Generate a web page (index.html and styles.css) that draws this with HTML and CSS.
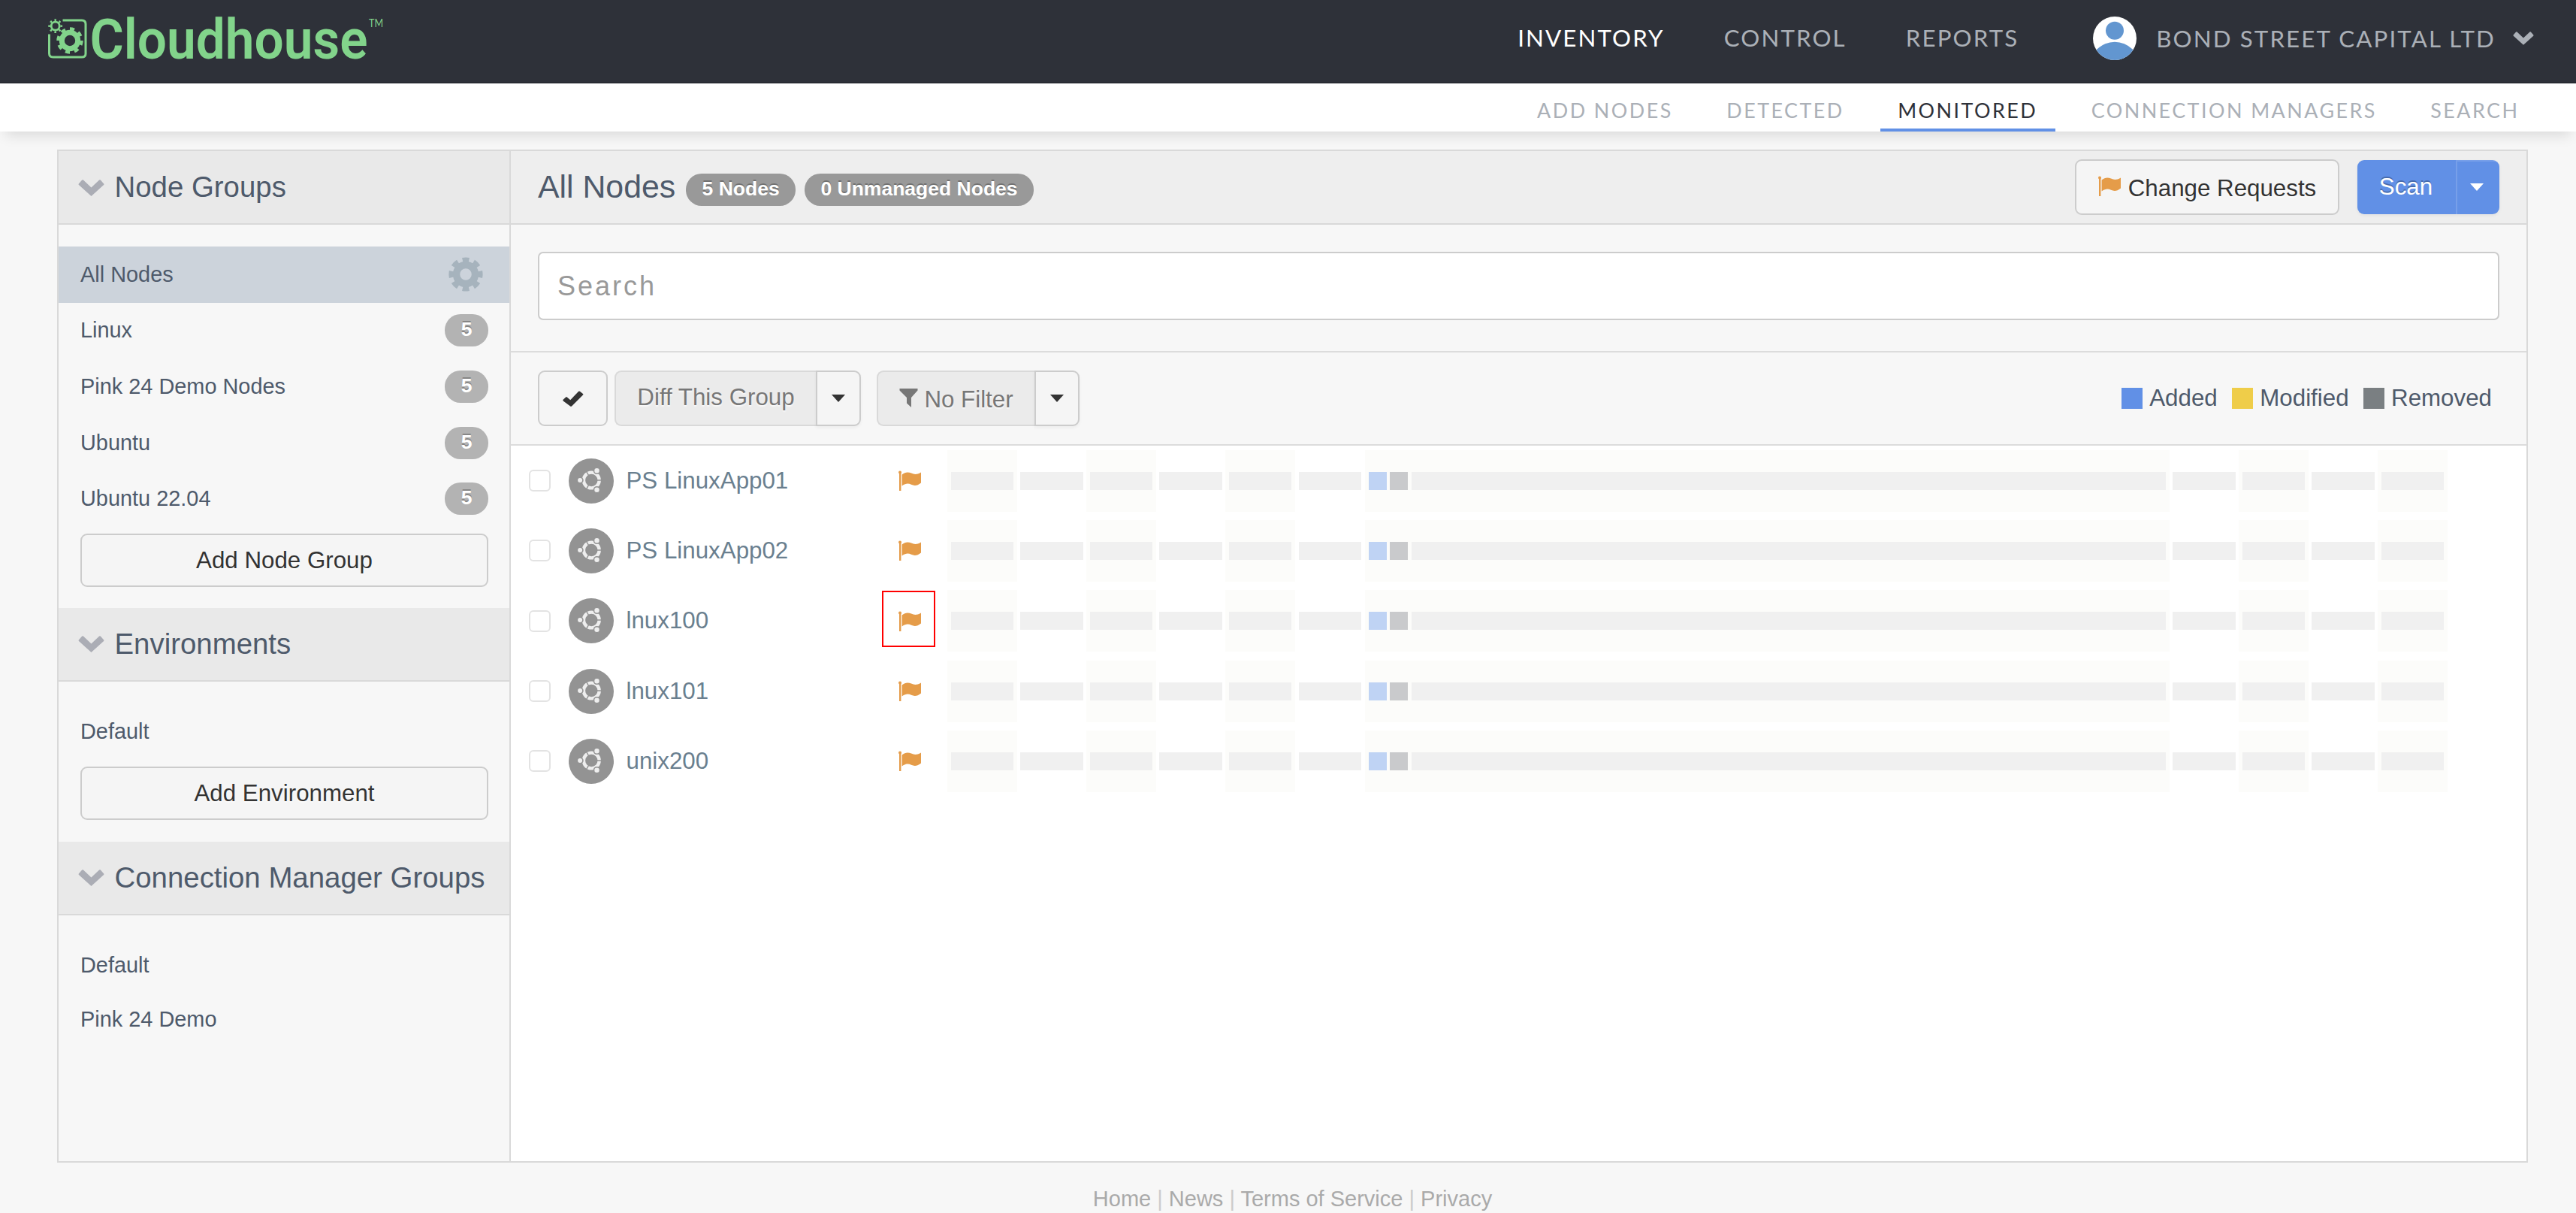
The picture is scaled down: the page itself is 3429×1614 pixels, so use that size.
FILE: index.html
```html
<!DOCTYPE html>
<html lang="en">
<head>
<meta charset="utf-8">
<title>Cloudhouse</title>
<link rel="stylesheet" href="styles.css">
</head>
<body>
<svg class="defs" aria-hidden="true">
  <symbol id="flag" viewBox="0 0 30 27"><circle cx="2" cy="2.4" r="2"/><rect x="1" y="2" width="2.4" height="25"/><path d="M4.6 5.5C9 1.8 13 1.8 17 3.6S24 6 30 2.6V16.5C25 20.6 21 20.6 17 18.8S10 17 4.6 20.4Z"/></symbol>
  <symbol id="chevron" viewBox="0 0 35 23"><path d="M.8 6.6 5.2 1.6Q6 .8 6.9 1.6L17.5 11.6 28.1 1.6Q29 .8 29.8 1.6L34.2 6.6Q34.7 7.3 34.1 8L17.5 23 .9 8Q.3 7.3 .8 6.6Z"/></symbol>
  <symbol id="ubuntu" viewBox="0 0 60 60">
    <circle cx="30" cy="30" r="30" fill="#939393"/>
    <g transform="translate(30.3 29)">
      <circle r="10.4" fill="none" stroke="#eee" stroke-width="4.4"/>
      <g stroke="#939393" stroke-width="1.4"><path d="M6 0H14M-3-5.2-7-12.1M-3 5.2-7 12.1"/></g>
      <g fill="#eee" stroke="#939393" stroke-width="1.6"><circle cx="-15.2" r="3.8"/><circle cx="7.2" cy="-12.7" r="4"/><circle cx="7.2" cy="12.7" r="4"/></g>
    </g>
  </symbol>
</svg>

<header class="topbar">
  <a class="logo">
    <svg width="450" height="60" viewBox="0 0 450 60">
      <g fill="none" stroke="#82d48b">
        <path d="M19.5 7H45Q50 7 50 12V51.500Q50 56 45 56H6.500Q1.500 56 1.500 51V25.500" stroke-width="3"/>
        <circle cx="29" cy="34" r="10.7" stroke-width="7"/>
        <circle cx="29" cy="34" r="15.5" stroke-width="4.4" pathLength="16" stroke-dasharray="1 1"/>
        <circle cx="9.7" cy="14.7" r="5.5" stroke-width="2.8"/>
        <circle cx="9.7" cy="14.7" r="8" stroke-width="2.8" pathLength="16" stroke-dasharray=".8 1.2" stroke-dashoffset=".4"/>
      </g>
      <text class="logo-name" x="55.5" y="57.5" textLength="370" lengthAdjust="spacingAndGlyphs">Cloudhouse</text>
      <text class="logo-tm" x="427" y="16" textLength="19" lengthAdjust="spacingAndGlyphs">TM</text>
    </svg>
  </a>
  <nav class="mainnav"><a class="on">INVENTORY</a><a>CONTROL</a><a>REPORTS</a></nav>
  <div class="account">
    <svg width="58" height="58" viewBox="0 0 58 58"><clipPath id="disc"><circle cx="29" cy="29" r="29"/></clipPath><g clip-path="url(#disc)"><rect width="58" height="58" fill="#fff"/><g fill="#6296d0"><circle cx="29" cy="18.7" r="12"/><circle cx="29" cy="66.7" r="33"/></g></g></svg>
    <span>BOND STREET CAPITAL LTD</span>
    <svg class="chev" width="28" height="19"><use href="#chevron"/></svg>
  </div>
</header>
<nav class="subnav"><a>ADD NODES</a><a>DETECTED</a><a class="on">MONITORED</a><a>CONNECTION MANAGERS</a><a>SEARCH</a></nav>

<main class="panel">
  <aside class="sidebar">
    <h2><svg width="35" height="23"><use href="#chevron"/></svg>Node Groups</h2>
    <ul>
      <li class="on">All Nodes
        <svg width="46" height="46" viewBox="-23 -23 46 46"><g fill="none" stroke="#a6b3bd"><circle r="12.5" stroke-width="9.4"/><circle r="19.4" stroke-width="6.4" pathLength="16" stroke-dasharray="1.15 .85" stroke-dashoffset=".575"/></g></svg></li>
      <li>Linux<b>5</b></li>
      <li>Pink 24 Demo Nodes<b>5</b></li>
      <li>Ubuntu<b>5</b></li>
      <li>Ubuntu 22.04<b>5</b></li>
    </ul>
    <button class="btn wide groups">Add Node Group</button>
    <h2><svg width="35" height="23"><use href="#chevron"/></svg>Environments</h2>
    <ul class="plain"><li>Default</li></ul>
    <button class="btn wide envs">Add Environment</button>
    <h2><svg width="35" height="23"><use href="#chevron"/></svg>Connection Manager Groups</h2>
    <ul class="plain"><li>Default</li><li>Pink 24 Demo</li></ul>
  </aside>

  <section class="content">
    <div class="titlebar">
      <h1>All Nodes</h1><span class="pill">5 Nodes</span><span class="pill">0 Unmanaged Nodes</span>
      <button class="btn requests"><svg class="flag" width="30" height="27"><use href="#flag"/></svg>Change Requests</button>
      <div class="scan"><button>Scan</button><button class="drop"><i class="caret"></i></button></div>
    </div>
    <div class="searchbar"><input type="text" placeholder="Search"></div>
    <div class="toolbar">
      <button class="btn check"><svg width="28" height="21" viewBox="0 0 28 21"><path d="M.6 11.8 4.2 8.4Q5 7.8 5.8 8.5L10.2 12.2 21.2.8Q22 .1 22.9.8L27 4Q27.7 4.7 27 5.5L12.3 20.2Q11 21.4 9.8 20.2L.7 13.4Q0 12.6.6 11.8Z" fill="#333"/></svg></button>
      <div class="split diff"><button class="btn off">Diff This Group</button><button class="btn drop"><i class="caret"></i></button></div>
      <div class="split filter"><button class="btn off"><svg width="25" height="25" viewBox="0 0 25 25"><path d="M.5 0H24.5V2.5L16 12V25L10 19.5V12L.5 2.5Z" fill="#777"/></svg>No Filter</button><button class="btn drop"><i class="caret"></i></button></div>
      <div class="legend"><span class="added">Added</span><span class="modified">Modified</span><span class="removed">Removed</span></div>
    </div>
    <div class="nodes">
      <div class="node"><i class="box"></i><svg class="os"><use href="#ubuntu"/></svg><a>PS LinuxApp01</a><span class="mark"><svg class="flag" width="30" height="27"><use href="#flag"/></svg></span><div class="timeline"><i></i><i></i><i></i><i></i><i></i><i></i><div class="now"><i class="a"></i><i class="r"></i><i></i></div><i></i><i></i><i></i><i></i></div></div>
      <div class="node"><i class="box"></i><svg class="os"><use href="#ubuntu"/></svg><a>PS LinuxApp02</a><span class="mark"><svg class="flag" width="30" height="27"><use href="#flag"/></svg></span><div class="timeline"><i></i><i></i><i></i><i></i><i></i><i></i><div class="now"><i class="a"></i><i class="r"></i><i></i></div><i></i><i></i><i></i><i></i></div></div>
      <div class="node"><i class="box"></i><svg class="os"><use href="#ubuntu"/></svg><a>lnux100</a><span class="mark picked"><svg class="flag" width="30" height="27"><use href="#flag"/></svg></span><div class="timeline"><i></i><i></i><i></i><i></i><i></i><i></i><div class="now"><i class="a"></i><i class="r"></i><i></i></div><i></i><i></i><i></i><i></i></div></div>
      <div class="node"><i class="box"></i><svg class="os"><use href="#ubuntu"/></svg><a>lnux101</a><span class="mark"><svg class="flag" width="30" height="27"><use href="#flag"/></svg></span><div class="timeline"><i></i><i></i><i></i><i></i><i></i><i></i><div class="now"><i class="a"></i><i class="r"></i><i></i></div><i></i><i></i><i></i><i></i></div></div>
      <div class="node"><i class="box"></i><svg class="os"><use href="#ubuntu"/></svg><a>unix200</a><span class="mark"><svg class="flag" width="30" height="27"><use href="#flag"/></svg></span><div class="timeline"><i></i><i></i><i></i><i></i><i></i><i></i><div class="now"><i class="a"></i><i class="r"></i><i></i></div><i></i><i></i><i></i><i></i></div></div>
    </div>
  </section>
</main>
<footer><a>Home</a> | <a>News</a> | <a>Terms of Service</a> | <a>Privacy</a></footer>
</body>
</html>
```
FILE: styles.css
```css
*, ::before, ::after { box-sizing: border-box; }
html, body { height: 100%; }
body {
  margin: 0;
  overflow: hidden;
  background: #f7f7f7;
  color: #4e5a6b;
  font: 31.3px/1.15 "Liberation Sans", Arial, sans-serif;
}
svg { display: block; flex: none; }
button, input { font: inherit; margin: 0; }
ul { list-style: none; margin: 0; padding: 0; }
.defs { width: 0; height: 0; position: absolute; }
.flag { fill: #e59c49; }

/* header */
.topbar {
  height: 111px;
  padding: 0 56px 10px 62px;
  display: flex;
  align-items: center;
  background: #2e3139;
  color: #abb0b7;
  font-family: Lato, sans-serif;
  letter-spacing: 2.1px;
  border-bottom: 2px solid #282b32;
}
.logo { margin-right: auto; padding: 1px 0 0 2px; }
.logo svg { overflow: visible; }
.logo-name { font: 600 75px Roboto, sans-serif; fill: #82d48b; letter-spacing: 0; }
.logo-tm { font: 400 15px Lato, sans-serif; fill: #82d48b; letter-spacing: 0; }
.mainnav { display: flex; gap: 79px; }
.mainnav .on { color: #fff; }
.account { display: flex; align-items: center; margin-left: 99px; padding-top: 2px; }
.account span { margin: 0 23px 0 26px; }
.chev { fill: #abb0b7; }

.subnav {
  height: 64px;
  padding-right: 52px;
  display: flex;
  justify-content: flex-end;
  gap: 24.5px;
  background: #fff;
  color: #abb0b7;
  font: 26.9px/1.2 Lato, sans-serif;
  letter-spacing: 2.45px;
  box-shadow: 0 12px 18px -7px rgba(0, 0, 0, .12);
}
.subnav a { padding: 20px 23.5px 0; border-bottom: 4px solid transparent; }
.subnav .on { color: #2e3139; border-color: #6190e6; }

/* main frame */
.panel {
  display: flex;
  width: 3289px;
  height: 1348px;
  margin: 24px 0 0 76px;
  border: 2px solid #d9d9d9;
}
.sidebar { width: 602px; border-right: 2px solid #d9d9d9; font-size: 28.9px; }
.sidebar h2 {
  height: 98px;
  margin: 0 0 29px;
  padding-left: 26px;
  display: flex;
  align-items: center;
  gap: 13.5px;
  background: #e9e9e9;
  border-bottom: 2px solid #d9d9d9;
  font-size: 38.4px;
  font-weight: 400;
  white-space: nowrap;
}
.sidebar h2 svg { fill: #abadb5; }
.sidebar li {
  height: 74.67px;
  padding: 0 28px 0 29px;
  display: flex;
  align-items: center;
  justify-content: space-between;
}
.sidebar li.on { background: #ccd3db; padding-right: 35px; }
.sidebar .plain li { height: 72px; padding-top: 3px; }
.sidebar b {
  width: 58px;
  height: 43px;
  border-radius: 21px;
  background: #b3b3b3;
  color: #fff;
  font-size: 26.5px;
  line-height: 40px;
  text-align: center;
  text-shadow: 0 -2px 0 rgba(0, 0, 0, .25);
}

.btn {
  display: flex;
  align-items: center;
  justify-content: center;
  padding: 0;
  border: 2px solid #ccc;
  border-radius: 9px;
  background: #f5f5f5;
  color: #333;
  text-shadow: 0 2px 2px rgba(255, 255, 255, .75);
  font-size: 31.3px;
}
.wide { width: 543px; height: 71px; margin: 0 0 28px 29px; padding-top: 2px; }
.groups { margin-top: 8.6px; }
.envs { margin-top: 12px; margin-bottom: 29px; }

/* content */
.content { flex: 1; display: flex; flex-direction: column; background: #fff; }
.titlebar {
  height: 98px;
  padding: 0 36px 0 36px;
  display: flex;
  align-items: center;
  background: #eee;
  border-bottom: 2px solid #d9d9d9;
}
h1 { margin: 0 14px 0 0; padding-bottom: 1px; font-size: 42.8px; font-weight: 400; }
.pill {
  height: 43px;
  margin: 7px 12px 0 0;
  padding: 0 21.4px;
  border-radius: 21px;
  background: #999;
  color: #fff;
  font-size: 26.5px;
  font-weight: 700;
  line-height: 40px;
  text-shadow: 0 -2px 0 rgba(0, 0, 0, .25);
}
.requests { width: 352px; height: 74px; margin: 0 24px 0 auto; gap: 10px; padding-top: 3px; }
.requests .flag { margin-bottom: 7px; }
.scan { display: flex; width: 189px; height: 72px; border-radius: 9px; background: #6190e6; box-shadow: 0 2px 4px rgba(0, 0, 0, .05); }
.scan button {
  flex: 1;
  border: 0;
  padding: 0 2px 0 0;
  background: none;
  color: #fff;
  text-shadow: 0 -2px 0 rgba(0, 0, 0, .25);
}
.scan .drop { flex: 0 0 58px; display: flex; align-items: center; justify-content: center; border-radius: 0 9px 9px 0; box-shadow: inset 2px 2px 0 rgba(255, 255, 255, .14); }
.caret { border: 9px solid transparent; border-top-color: #333; border-top-width: 10px; border-bottom: 0; }
.scan .caret { border-top-color: #fff; }

.searchbar { height: 170px; padding: 36px 36px 0; background: #f7f7f7; border-bottom: 2px solid #dcdcdc; }
.searchbar input {
  display: block;
  width: 100%;
  height: 91px;
  padding: 0 24px;
  border: 2px solid #ccc;
  border-radius: 7px;
  background: #fff;
  font-size: 36px;
  letter-spacing: 3px;
}
.searchbar input::placeholder { color: #999; opacity: 1; }

.toolbar {
  height: 124px;
  padding: 0 46px 0 36px;
  display: flex;
  align-items: center;
  background: #f7f7f7;
  border-bottom: 2px solid #dcdcdc;
}
.check { width: 93px; height: 74px; margin-right: 9px; }
.split { display: flex; height: 74px; }
.split .off { border-radius: 9px 0 0 9px; border-color: #d9d9d9; border-right: 0; background: #ebebeb; color: #777; }
.split .drop { width: 60px; border-radius: 0 9px 9px 0; box-shadow: 0 2px 4px rgba(0, 0, 0, .05); }
.diff { width: 328px; margin-right: 21px; }
.diff .off { flex: 1; padding-bottom: 3px; }
.filter { width: 270px; }
.filter .off { flex: 1; gap: 8px; padding-top: 3px; }
.filter .off svg { margin-bottom: 4px; }
.legend { margin-left: auto; display: flex; gap: 19px; }
.legend span { display: flex; align-items: center; gap: 9.5px; }
.legend span::before { content: ""; width: 28px; height: 28px; background: #6190e6; }
.legend .modified::before { background: #efcd49; }
.legend .removed::before { background: #7a7f82; }

/* node rows */
.nodes { padding-left: 24px; }
.node {
  height: 93.3px;
  display: grid;
  grid-template-columns: 53px 76.5px 362.5px 65px 1997px;
  align-items: center;
}
.box { width: 29px; height: 29px; border: 2px solid #e3e3e3; border-radius: 6px; background: #fff; }
.os { width: 60px; height: 60px; }
.node a { color: #6a7f8f; }
.mark { position: relative; }
.picked::after { content: ""; position: absolute; left: -22px; top: -27px; width: 71px; height: 75px; border: 2px solid #f00; }
.timeline { height: 82px; display: grid; grid-template-columns: repeat(6, 92.6px) 1071px repeat(4, 92.6px); }
.timeline > * { padding: 29px 4.6px; }
.timeline > :nth-child(odd) { background: #fcfcfa; }
.timeline > i::before, .now i { content: ""; display: block; height: 24px; background: #f0f0f0; }
.timeline > .now { display: flex; gap: 4.3px; padding-left: 5.6px; }
.now i { flex: 1; }
.now .a, .now .r { flex: 0 0 24px; }
.now .a { background: #bfd3f4; }
.now .r { background: #c9cacc; }

footer { margin-top: 32px; text-align: center; padding-left: 12px; font-size: 29px; color: #ccc; }
footer a { color: #aaa; }
```
